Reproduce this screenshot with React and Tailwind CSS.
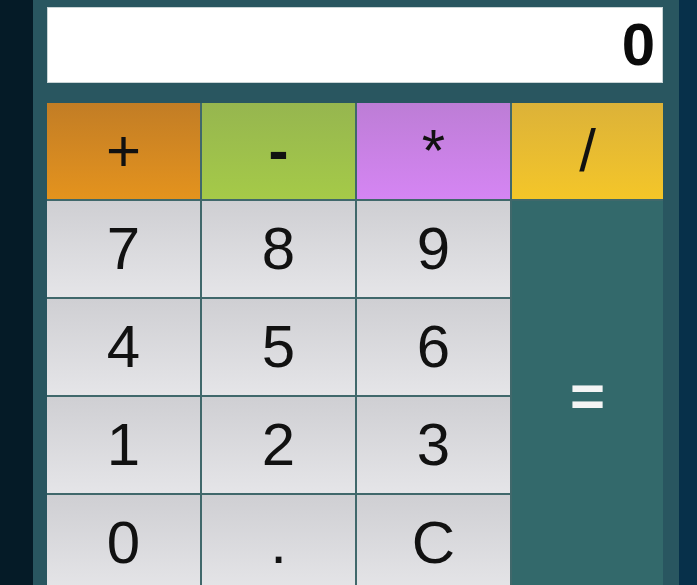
import React, { useState } from 'react';

const ops = [
  { label: '+', cls: 'bg-gradient-to-b from-[#c27d25] to-[#e4931d]' },
  { label: '-', cls: 'bg-gradient-to-b from-[#96b64f] to-[#a5ca48] font-bold' },
  { label: '*', cls: 'bg-gradient-to-b from-[#bd7dd6] to-[#d585f3]' },
  { label: '/', cls: 'bg-gradient-to-b from-[#dcb238] to-[#f4c628]' },
];

const digits = ['7', '8', '9', '4', '5', '6', '1', '2', '3', '0', '.', 'C'];

export default function App() {
  const [display, setDisplay] = useState('0');

  const press = (k) => {
    if (k === 'C') return setDisplay('0');
    setDisplay((d) => (d === '0' && k !== '.' ? k : d + k));
  };

  return (
    <div className="w-[697px] h-[585px] overflow-hidden flex bg-[#07304a] font-['Liberation_Sans',Arial,sans-serif]">
      {/* left dark edge */}
      <div className="w-[33px] shrink-0 bg-[#051b27]" />

      {/* calculator body */}
      <div className="w-[646px] shrink-0 bg-[#295660] pl-[14px] pr-[16px] pt-[7px] flex flex-col">
        <div className="h-[76px] shrink-0 bg-white border border-[#c9d4d6] flex items-center justify-end pr-[7px] text-[60px] font-bold text-[#0b0b0b] leading-none">
          {display}
        </div>

        <div className="mt-[20px] shrink-0 grid grid-cols-[153px_153px_153px_151px] grid-rows-[96px_96px_96px_96px_96px] gap-[2px] bg-[#40686b]">
          {ops.map((o) => (
            <button
              key={o.label}
              className={`${o.cls} flex items-center justify-center text-[60px] leading-none text-[#111]`}
            >
              {o.label}
            </button>
          ))}

          {digits.map((d, i) => (
            <button
              key={d}
              onClick={() => press(d)}
              style={{ gridColumn: (i % 3) + 1, gridRow: Math.floor(i / 3) + 2 }}
              className="bg-gradient-to-b from-[#cfcfd3] to-[#e5e5e8] flex items-center justify-center text-[60px] leading-none text-[#111]"
            >
              {d}
            </button>
          ))}

          <button className="col-start-4 row-start-2 row-span-4 bg-[#33696b] flex items-center justify-center text-[60px] font-bold leading-none text-[#f4f4f4]">
            =
          </button>
        </div>
      </div>
    </div>
  );
}
